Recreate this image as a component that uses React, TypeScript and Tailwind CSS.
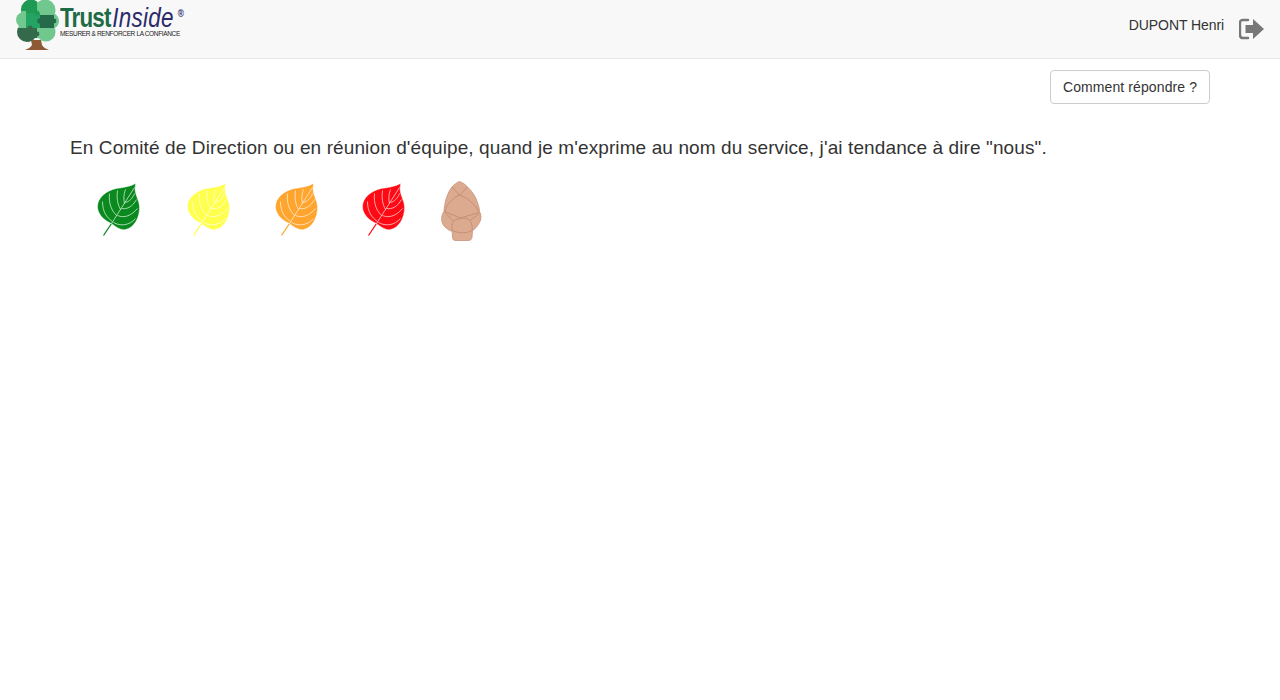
function Leaf({ fill, className }: { fill: string; className: string }) {
  return (
    <svg width="44" height="54" viewBox="0.5 0.5 44 54" className={className}>
      <path d="M7 53 L15 41" fill="none" stroke={fill} strokeWidth="1.3" />
      <path
        d="M39 1 C34 4 27 5 20 6 C10 8 1 15 1 24 C1 32 8 38 15 41 C20 45 25 48 29 47 C38 45 43 35 43 25 C43 19 40 15 39 10 C38 6 39 4 39 1 Z"
        fill={fill}
        stroke="#ffffff"
        strokeOpacity="0.4"
        strokeWidth="1"
      />
      <g fill="none" stroke="#ffffff" strokeWidth="0.9" strokeOpacity="0.7">
        <path d="M15 41 L38 5" />
        <path d="M16 39 C10 35 6 29 6 19" />
        <path d="M20 33 C15 28 12 21 13 11" />
        <path d="M24 27 C21 22 20 15 21 8" />
        <path d="M28 21 C27 17 27 12 29 7" />
        <path d="M17 40 C24 44 33 43 39 36" />
        <path d="M21 33 C28 36 35 33 41 26" />
        <path d="M25 26 C31 27 36 24 40 17" />
        <path d="M29 20 C33 19 36 16 38 11" />
      </g>
    </svg>
  );
}

function Cone() {
  return (
    <svg width="41" height="60" viewBox="-0.5 -0.5 41 60" className="ml-[35px] -mt-[2px]">
      <path
        d="M18 0 C21 1 24 3 26 5.5 C31 10 34 15 36 21 C37 24 38 27 38 30 C40 33 40 38 38 41 C36 45 33 48 31 49 L30.5 56 C30 58 29 59 27 59 L14 59 C12 59 11 58 11 56 L10.7 50 C6 48 3 46 1 42 C-0.5 38 0 33 2.5 30 C3 20 6 11 10.7 5.3 C13 3 15 1 18 0 Z"
        fill="#dcaa8f"
        stroke="#c4937b"
        strokeWidth="0.8"
      />
      <g fill="none" stroke="#c08d75" strokeWidth="0.9">
        <path d="M10.7 5.3 L18 13.7 L25.7 5.8" />
        <path d="M3.5 30 C4 26 7 21 10.7 18.7 C13 16 16 14 18 13.7 C22 15 26 17 29 20 C33 23 36 27 37 30" />
        <path d="M3 30 L19 36.5 L37.5 31" />
        <path d="M2.5 30 L12 39.7" />
        <path d="M38 32 L29 38.7" />
        <path d="M10.7 49 C10 43 11 40 13 39 C16 37 22 36 25 37 C29 38 31 42 30.7 49" />
        <path d="M10.7 49 C17 52 25 52 30.7 49" />
      </g>
    </svg>
  );
}

function Logo() {
  return (
    <div className="flex items-start pl-4 h-full overflow-hidden">
      <svg width="43" height="50" viewBox="0 0 43 50" className="shrink-0">
        <defs>
          <clipPath id="canopy">
            <circle cx="15" cy="9.5" r="10" />
            <circle cx="29" cy="10" r="10.5" />
            <circle cx="8" cy="20" r="8" />
            <circle cx="35" cy="21" r="8" />
            <circle cx="11" cy="32" r="10" />
            <circle cx="30" cy="32" r="9.5" />
            <rect x="8" y="6" width="26" height="32" />
          </clipPath>
        </defs>
        <path d="M15 40 L25 40 L26 45 C27 47 30 49 33 50 L9 50 C12 49 15 47 16 45 Z" fill="#8e5a33" />
        <g clipPath="url(#canopy)">
          <rect x="0" y="0" width="21" height="13" fill="#1f9a55" />
          <rect x="21" y="0" width="22" height="15" fill="#71c88f" />
          <rect x="0" y="11" width="10" height="18" fill="#71c88f" />
          <rect x="10" y="13" width="14" height="15" fill="#24a463" />
          <circle cx="21" cy="13" r="2.5" fill="#1f9a55" />
          <rect x="37" y="14" width="6" height="16" fill="#71c88f" />
          <rect x="24" y="15" width="14" height="13" fill="#256b4a" />
          <circle cx="24" cy="21" r="2.8" fill="#256b4a" />
          <circle cx="38" cy="21" r="2.4" fill="#256b4a" />
          <rect x="0" y="28" width="21" height="15" fill="#35694b" />
          <circle cx="14" cy="28" r="2.6" fill="#35694b" />
          <rect x="21" y="28" width="22" height="15" fill="#71c88f" />
          <circle cx="21" cy="34" r="2.4" fill="#35694b" />
        </g>
      </svg>
      <div className="ml-[1px] whitespace-nowrap">
        <div className="flex h-[30px] origin-left scale-x-[0.83] items-start pt-[7px] text-[27px] leading-[23px]">
          <span className="font-bold text-[#1f6b45] tracking-[-1px]">Trust</span>
          <span className="italic text-[#2b2a6b] tracking-[0.3px] ml-[2px]">Inside</span>
          <span className="ml-[5px] text-[10px] leading-[14px] font-bold text-[#2b2a6b]">®</span>
        </div>
        <div className="text-[6.5px] leading-[7px] text-[#222222] tracking-[-0.35px]">
          MESURER &amp; RENFORCER LA CONFIANCE
        </div>
      </div>
    </div>
  );
}

export default function App() {
  return (
    <div className="min-h-[700px] bg-white font-['Liberation_Sans',sans-serif] text-[#333333]">
      {/* Header */}
      <header className="flex h-[59px] items-start justify-between border-b border-[#e7e7e7] bg-[#f8f8f8]">
        <Logo />
        <div className="flex items-start pr-4 pt-[15px]">
          <span className="text-sm leading-[20px] tracking-[-0.08px]">DUPONT Henri</span>
          <svg width="25" height="22" viewBox="0 0 25 22" className="ml-[15px] mt-[3px]">
            <path
              d="M9 2 L4 2 C2 2 1 3 1 5 L1 17 C1 19 2 20 4 20 L9 20"
              fill="none"
              stroke="#777777"
              strokeWidth="2.4"
              strokeLinecap="round"
            />
            <path d="M6.5 7 L14 7 L14 1 L25 11 L14 21 L14 15 L6.5 15 Z" fill="#777777" />
          </svg>
        </div>
      </header>

      {/* Question */}
      <main className="px-[70px]">
        <div className="flex justify-end pt-[11px]">
          <button className="h-[34px] w-[160px] rounded border border-[#cccccc] bg-white text-sm tracking-[0.1px] text-[#333333]">
            Comment répondre ?
          </button>
        </div>
        <p className="mt-[31px] text-[19px] leading-[26px] whitespace-nowrap tracking-[0.11px]">
          En Comité de Direction ou en réunion d'équipe, quand je m'exprime au nom du service, j'ai tendance à dire "nous".
        </p>
        <div className="mt-[22px] flex items-start">
          <Leaf fill="#0a8a1e" className="ml-[27px]" />
          <Leaf fill="#ffff4d" className="ml-[46px]" />
          <Leaf fill="#ffa52e" className="ml-[44px]" />
          <Leaf fill="#ff0a14" className="ml-[43px]" />
          <Cone />
        </div>
      </main>
    </div>
  );
}
